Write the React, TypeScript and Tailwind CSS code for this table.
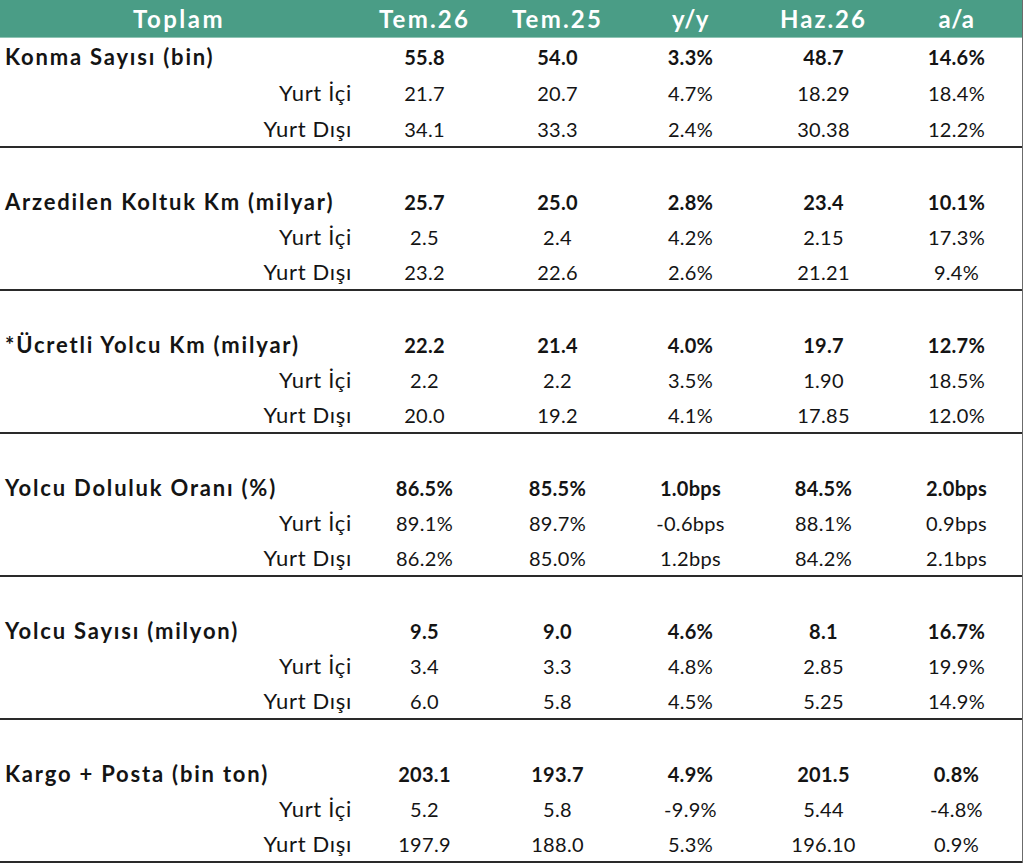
import React from "react";

type Row = { label: string; vals: string[] };
type Section = { title: Row; sub: Row[] };

const sections: Section[] = [
  {
    title: { label: "Konma Sayısı (bin)", vals: ["55.8", "54.0", "3.3%", "48.7", "14.6%"] },
    sub: [
      { label: "Yurt İçi", vals: ["21.7", "20.7", "4.7%", "18.29", "18.4%"] },
      { label: "Yurt Dışı", vals: ["34.1", "33.3", "2.4%", "30.38", "12.2%"] },
    ],
  },
  {
    title: { label: "Arzedilen Koltuk Km (milyar)", vals: ["25.7", "25.0", "2.8%", "23.4", "10.1%"] },
    sub: [
      { label: "Yurt İçi", vals: ["2.5", "2.4", "4.2%", "2.15", "17.3%"] },
      { label: "Yurt Dışı", vals: ["23.2", "22.6", "2.6%", "21.21", "9.4%"] },
    ],
  },
  {
    title: { label: "*Ücretli Yolcu Km (milyar)", vals: ["22.2", "21.4", "4.0%", "19.7", "12.7%"] },
    sub: [
      { label: "Yurt İçi", vals: ["2.2", "2.2", "3.5%", "1.90", "18.5%"] },
      { label: "Yurt Dışı", vals: ["20.0", "19.2", "4.1%", "17.85", "12.0%"] },
    ],
  },
  {
    title: { label: "Yolcu Doluluk Oranı (%)", vals: ["86.5%", "85.5%", "1.0bps", "84.5%", "2.0bps"] },
    sub: [
      { label: "Yurt İçi", vals: ["89.1%", "89.7%", "-0.6bps", "88.1%", "0.9bps"] },
      { label: "Yurt Dışı", vals: ["86.2%", "85.0%", "1.2bps", "84.2%", "2.1bps"] },
    ],
  },
  {
    title: { label: "Yolcu Sayısı (milyon)", vals: ["9.5", "9.0", "4.6%", "8.1", "16.7%"] },
    sub: [
      { label: "Yurt İçi", vals: ["3.4", "3.3", "4.8%", "2.85", "19.9%"] },
      { label: "Yurt Dışı", vals: ["6.0", "5.8", "4.5%", "5.25", "14.9%"] },
    ],
  },
  {
    title: { label: "Kargo + Posta (bin ton)", vals: ["203.1", "193.7", "4.9%", "201.5", "0.8%"] },
    sub: [
      { label: "Yurt İçi", vals: ["5.2", "5.8", "-9.9%", "5.44", "-4.8%"] },
      { label: "Yurt Dışı", vals: ["197.9", "188.0", "5.3%", "196.10", "0.9%"] },
    ],
  },
];

const grid = "grid grid-cols-[358px_repeat(5,133px)] items-center";

const headers: { t: string; cls: string }[] = [
  { t: "Toplam", cls: "tracking-[2.5px]" },
  { t: "Tem.26", cls: "tracking-[2.2px]" },
  { t: "Tem.25", cls: "tracking-[2.2px]" },
  { t: "y/y", cls: "tracking-[0.5px]" },
  { t: "Haz.26", cls: "tracking-[2px]" },
  { t: "a/a", cls: "tracking-[0.5px]" },
];

function DataRow({ row, bold, h }: { row: Row; bold: boolean; h: string }) {
  return (
    <div className={`${grid} ${h} pt-[2px]`}>
      {bold ? (
        <div className="pl-[5px] font-bold whitespace-nowrap text-[22px] tracking-[1.8px]">{row.label}</div>
      ) : (
        <div className="pr-[6px] text-right whitespace-nowrap text-[22px] tracking-[0.7px]">{row.label}</div>
      )}
      {row.vals.map((v, i) => (
        <div key={i} className={`text-center text-[20px] tracking-[0.3px] ${bold ? "font-bold" : ""}`}>
          {v}
        </div>
      ))}
    </div>
  );
}

export default function App() {
  return (
    <div className="w-[1024px] h-[864px] bg-white overflow-hidden">
      <div
        className="w-[1023px] border-r border-[#6b6b6b] text-[#141414] leading-none"
        style={{ fontFamily: "Lato, 'Open Sans', sans-serif" }}
      >
        <div className={`${grid} h-[38px] bg-[#4a9d86] text-white font-bold text-[24px] border-b border-[#8fc4b4]`}>
          {headers.map((hd) => (
            <div key={hd.t} className={`text-center ${hd.cls}`}>
              {hd.t}
            </div>
          ))}
        </div>
        {sections.map((s, idx) => {
          const h = idx === 0 ? "h-[36px]" : "h-[35.25px]";
          return (
            <div key={idx} className="border-b-2 border-[#2a2a2a]">
              {idx > 0 && <div className="h-[35.25px]" />}
              <DataRow row={s.title} bold h={h} />
              {s.sub.map((r, j) => (
                <DataRow key={j} row={r} bold={false} h={h} />
              ))}
            </div>
          );
        })}
      </div>
    </div>
  );
}
